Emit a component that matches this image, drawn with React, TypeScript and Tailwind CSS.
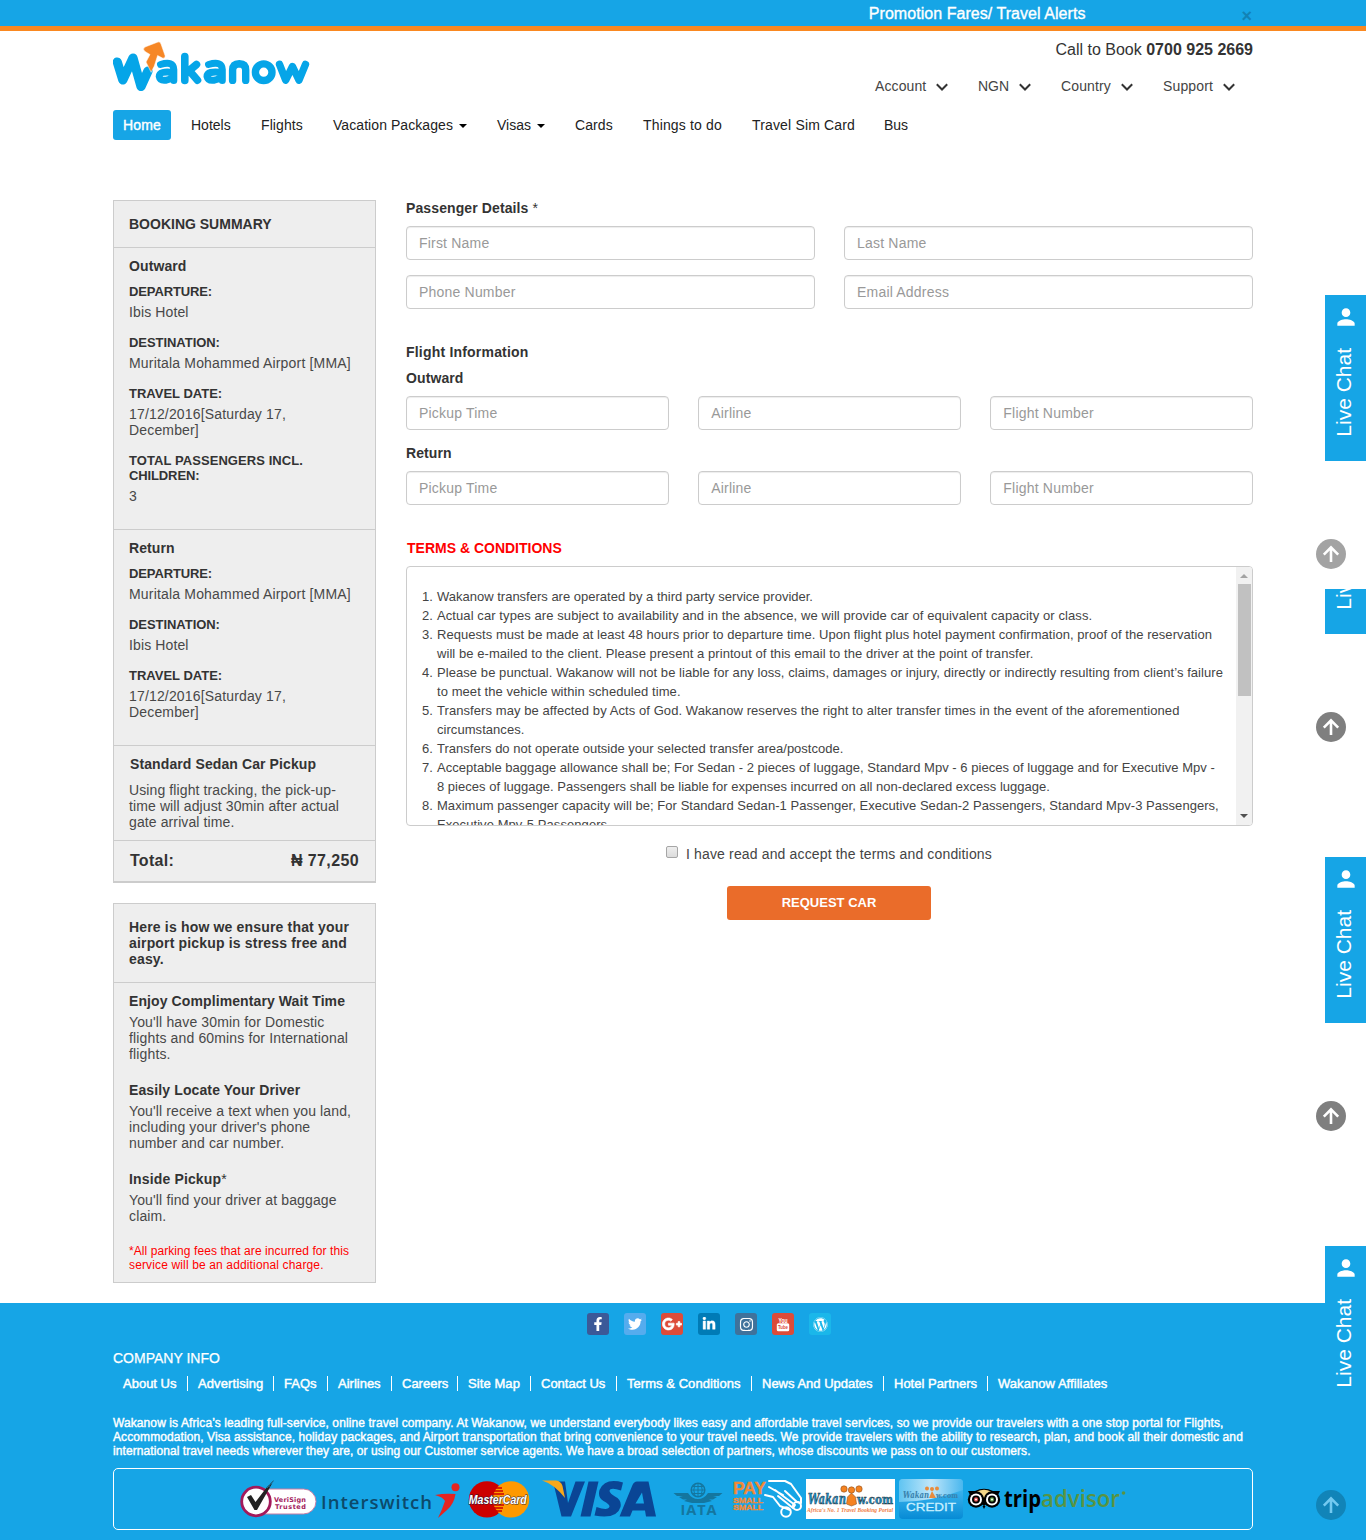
import type { ReactNode } from "react";
import { FaFacebookF, FaTwitter, FaGooglePlusG, FaLinkedinIn, FaInstagram, FaWordpress } from "react-icons/fa";
import { MdPerson } from "react-icons/md";

const menu = [
  { label: "Account", cls: "w-[51px] tracking-[0.1px]" },
  { label: "NGN", cls: "w-[31px]" },
  { label: "Country", cls: "w-[50px] tracking-[0.13px]" },
  { label: "Support", cls: "w-[50px] tracking-[0.13px]" },
];

const nav = [
  { label: "Hotels", cls: "w-[40px]" },
  { label: "Flights", cls: "w-[42px] tracking-[0.1px]" },
  { label: "Vacation Packages", cls: "w-[134px] tracking-[0.07px]", caret: true },
  { label: "Visas", cls: "w-[48px]", caret: true },
  { label: "Cards", cls: "w-[38px] tracking-[0.1px]" },
  { label: "Things to do", cls: "w-[79px] tracking-[0.16px]" },
  { label: "Travel Sim Card", cls: "w-[102px] tracking-[0.16px]" },
  { label: "Bus", cls: "w-[25px]" },
];

const links = [
  { label: "About Us", cls: "w-[75px]" },
  { label: "Advertising", cls: "w-[86px] tracking-[0.1px]" },
  { label: "FAQs", cls: "w-[54px]" },
  { label: "Airlines", cls: "w-[64px]" },
  { label: "Careers", cls: "w-[66px]" },
  { label: "Site Map", cls: "w-[73px] tracking-[0.08px]" },
  { label: "Contact Us", cls: "w-[86px]" },
  { label: "Terms & Conditions", cls: "w-[135px] tracking-[0.05px]" },
  { label: "News And Updates", cls: "w-[132px]" },
  { label: "Hotel Partners", cls: "w-[104px]" },
  { label: "Wakanow Affiliates", cls: "w-[131px] tracking-[0.05px]" },
];

const terms: { cls: string; text: string }[][] = [
  [{ cls: "", text: "Wakanow transfers are operated by a third party service provider." }],
  [{ cls: "tracking-[0.085px]", text: "Actual car types are subject to availability and in the absence, we will provide car of equivalent capacity or class." }],
  [
    { cls: "tracking-[0.04px]", text: "Requests must be made at least 48 hours prior to departure time. Upon flight plus hotel payment confirmation, proof of the reservation" },
    { cls: "tracking-[0.06px]", text: "will be e-mailed to the client. Please present a printout of this email to the driver at the point of transfer." },
  ],
  [
    { cls: "tracking-[0.067px]", text: "Please be punctual. Wakanow will not be liable for any loss, claims, damages or injury, directly or indirectly resulting from client’s failure" },
    { cls: "tracking-[0.07px]", text: "to meet the vehicle within scheduled time." },
  ],
  [
    { cls: "tracking-[0.075px]", text: "Transfers may be affected by Acts of God. Wakanow reserves the right to alter transfer times in the event of the aforementioned" },
    { cls: "tracking-[0.05px]", text: "circumstances." },
  ],
  [{ cls: "tracking-[0.01px]", text: "Transfers do not operate outside your selected transfer area/postcode." }],
  [
    { cls: "tracking-[0.035px]", text: "Acceptable baggage allowance shall be; For Sedan - 2 pieces of luggage, Standard Mpv - 6 pieces of luggage and for Executive Mpv -" },
    { cls: "tracking-[0.015px]", text: "8 pieces of luggage. Passengers shall be liable for expenses incurred on all non-declared excess luggage." },
  ],
  [
    { cls: "tracking-[0.04px]", text: "Maximum passenger capacity will be; For Standard Sedan-1 Passenger, Executive Sedan-2 Passengers, Standard Mpv-3 Passengers," },
    { cls: "tracking-[0.07px]", text: "Executive Mpv-5 Passengers." },
  ],
];

function Logo() {
  return (
    <svg width="197" height="51" viewBox="0 0 197 51" fill="none" stroke="#05a5e8" strokeWidth="7.6" strokeLinecap="round" strokeLinejoin="round">
      <path d="M4.300 21 9.800 39 20 17 28 45.500 35 30" strokeWidth="9.200" />
      <path d="M38 31 33 21 37 13.500 32 10.500Q29 8 32 6L45 1Q47 .3 48 3L52.200 15Q52 18 49.500 17L44.600 14.500 41.300 25Z" fill="#f68726" stroke="#fff" strokeWidth=".5" />
      <path d="M47.500 23.500Q60.500 19.500 60.800 28.500V39.500M60.500 31.500Q46.200 29.500 46.200 35.500 47 40 53 39.200 60.800 38 60.800 32" strokeWidth="7" />
      <path d="M71.800 15.500V39.500M83.500 23.500 74 31.500M77 30.500 84.500 39.200" />
      <path d="M95.500 23.500Q109 19.500 109.300 28.500V39.500M109 31.500Q94 29.500 94 35.500 95 40 101 39.200 109.300 38 109.300 32" strokeWidth="7" />
      <path d="M119.600 39.400V29Q119.800 22.800 126.300 22.700 132.700 22.800 132.700 29V39.400" strokeWidth="7.400" />
      <circle cx="150.700" cy="31.200" r="8.300" strokeWidth="7.400" />
      <path d="M166.500 23.300 172.700 39.200 179.500 25.500 186 39.200 192.500 23.300" strokeWidth="7.400" />
    </svg>
  );
}

function Field({ children }: { children: ReactNode }) {
  return (
    <div className="flex h-[34px] min-w-0 flex-1 items-center rounded border border-[#ccc] bg-white px-3 text-sm tracking-[0.2px] text-[#999] shadow-[inset_0_1px_1px_rgba(0,0,0,0.075)]">
      {children}
    </div>
  );
}

function Entry({ label, lines, cls = "" }: { label: ReactNode; lines: string[]; cls?: string }) {
  return (
    <>
      <dt className="text-[13px] font-bold leading-[15px]">{label}</dt>
      <dd className={"mt-[5px] mb-[15px] text-sm leading-4 text-[#484848] " + cls}>
        {lines.map((l) => (
          <div key={l}>{l}</div>
        ))}
      </dd>
    </>
  );
}

function LiveChat() {
  return (
    <div className="flex h-[166px] w-[41px] shrink-0 flex-col items-center bg-[#16a5e6] text-white">
      <MdPerson className="mt-[9px] h-[26px] w-[26px]" />
      <span className="mt-[18px] mr-[4px] rotate-180 text-[21px] leading-6 [writing-mode:vertical-rl]">Live Chat</span>
    </div>
  );
}

function ToTop({ cls }: { cls: string }) {
  return (
    <div className={"absolute right-5 flex size-[30px] items-center justify-center rounded-full " + cls}>
      <svg width="24" height="24" viewBox="0 0 24 24" fill="none" stroke="currentColor" strokeWidth="2.600">
        <path d="M12 20V6M4.800 12.600 12 5.400 19.200 12.600" />
      </svg>
    </div>
  );
}

function Payments() {
  return (
    <div className="flex h-[62px] rounded-[5px] border border-white pl-[125px] pt-[10px]">
      <svg width="79" height="40" viewBox="0 0 79 40" className="mr-[3px] shrink-0">
        <rect x="14" y="10" width="63" height="25" rx="12.500" fill="#fff" stroke="#c77ba3" strokeWidth="1" />
        <circle cx="17" cy="22.500" r="14.300" fill="#fff" stroke="#a3195b" strokeWidth="2.800" />
        <path d="M8 18 12 16 16.500 23 28 8 35 1 30 10 18 31 15.500 31Z" fill="#222" />
        <path d="M28 9 36 1M30 5 35 4M27 7 33 8" stroke="#16a5e6" strokeWidth=".8" strokeDasharray="1 1.500" />
        <text x="35" y="23" fontSize="6.500" fontWeight="700" fontFamily="DejaVu Sans" fill="#a3195b" textLength="32">VeriSign</text>
        <text x="36" y="30" fontSize="6.500" fontWeight="700" fontFamily="DejaVu Sans" fill="#a3195b" textLength="31">Trusted</text>
      </svg>
      <svg width="140" height="40" viewBox="0 0 140 40" className="mr-[7px] shrink-0">
        <text x="0" y="30.300" fontSize="18.500" fontWeight="600" fontFamily="Open Sans" fill="#0c4a6b" textLength="111">Interswitch</text>
        <circle cx="134.500" cy="8.300" r="4" fill="#e52421" />
        <path d="M114 16Q124 14 134.500 15 133 25 126 31L117 39Q121 31 124 22 122 18 114 16Z" fill="#e52421" />
      </svg>
      <svg width="62" height="40" viewBox="0 0 62 40" className="mr-[11px] shrink-0">
        <circle cx="19" cy="20.400" r="18.200" fill="#c00" />
        <circle cx="43" cy="20.400" r="18.200" fill="#f90" />
        <path d="M28 9H34M26 12H35M25 15H36M25 26H36M26 29H35M28 32H34" stroke="#c00" strokeWidth="1.400" />
        <text x=".8" y="24.500" fontSize="12.500" fontWeight="700" fontStyle="italic" fontFamily="Liberation Sans" fill="#fff" stroke="#1d1d3a" strokeWidth="1" paintOrder="stroke" textLength="58" lengthAdjust="spacingAndGlyphs">MasterCard</text>
      </svg>
      <svg width="116" height="40" viewBox="0 0 116 40" className="mr-4 shrink-0">
        <path d="M12 2.500H24L27 24 34.500 2.500H44L30 37.500H20.500Z" fill="#0a4595" />
        <path d="M1 1.500H15Q20 2 21.500 7L24 19Q13 5 1 1.500Z" fill="#f7a81b" />
        <path d="M47.500 2.500H57.500L49.500 37.500H39.500Z" fill="#0a4595" />
        <path d="M82 3.500 80 11.500Q69 8 68.500 12 69 14.500 74 17.500 81 21 79.500 28 76 40.500 53.500 36.500L55.500 28Q67.500 32 68.500 27.500 68.500 25 62.500 22 56.500 18.500 58.500 11 64 -1.500 82 3.500Z" fill="#0a4595" />
        <path d="M96 2.500H107.500L115 37.500H105L104 31.500H91.500L89 37.500H78.500L91.500 6Q93 2.500 96 2.500ZM101 13.500 94.500 24.500H103Z" fill="#0a4595" fillRule="evenodd" />
      </svg>
      <svg width="50" height="40" viewBox="0 0 50 40" className="mr-[9px] shrink-0">
        <g fill="none" stroke="#14769f">
          <circle cx="25" cy="11" r="6.800" strokeWidth="1.500" />
          <path d="M18.500 11H31.500M25 4V18M22 5Q19.500 11 22 17M28 5Q30.500 11 28 17M20 7.500H30M20 14.500H30" strokeWidth="1" />
        </g>
        <path d="M.5 14H15Q19 20 25 20 31 20 35 14H49.500L46 17H40L44 18 40 20.500H36L39 22 31 24H19L11 22 14 20.500H10L6 18 10 17H4Z" fill="#14769f" />
        <text x="7.500" y="36" fontSize="14.500" fontWeight="700" fontFamily="Open Sans" fill="#14769f" textLength="36">IATA</text>
      </svg>
      <svg width="71" height="40" viewBox="0 0 71 40" className="mr-[3px] shrink-0">
        <g fill="#f18a35" fontFamily="Liberation Sans" fontWeight="700" stroke="#f18a35" strokeWidth=".4">
          <text x="1" y="15" fontSize="17" textLength="33" lengthAdjust="spacingAndGlyphs">PAY</text>
          <text x="1" y="23.500" fontSize="7.500" textLength="30" lengthAdjust="spacingAndGlyphs">SMALL</text>
          <text x="1" y="31" fontSize="7.500" textLength="30" lengthAdjust="spacingAndGlyphs">SMALL</text>
        </g>
        <g fill="none" stroke="#fff" strokeWidth="2" strokeLinecap="round" strokeLinejoin="round">
          <path d="M37 2H53L59 5 69 19V24L65 23 53 12M37 8 51 16M33 16 41 18 48 27 58 31M43 11 63 26 61 29 46 17" />
          <circle cx="54" cy="33" r="4.800" />
          <circle cx="65" cy="27" r="4" />
        </g>
      </svg>
      <svg width="89" height="40" viewBox="0 0 89 40" className="mr-1 shrink-0">
        <rect width="89" height="40" fill="#fff" />
        <text x="2" y="25" fontSize="14" fontWeight="700" fontStyle="italic" fontFamily="DejaVu Serif" fill="#1590cd" stroke="#333" strokeWidth=".5" textLength="38" lengthAdjust="spacingAndGlyphs">Wakan</text>
        <g fill="#f58220" stroke="#8d5425" strokeWidth=".6">
          <circle cx="38" cy="10" r="3.200" /><circle cx="45.500" cy="11" r="3.200" /><circle cx="53" cy="10" r="3.200" />
          <path d="M45.500 14 49.500 18 50.500 25 45.500 27 40.500 25 41.500 18Z" />
        </g>
        <text x="51" y="25" fontSize="13" fontWeight="700" fontFamily="DejaVu Serif" fill="#1590cd" stroke="#333" strokeWidth=".5" textLength="36" lengthAdjust="spacingAndGlyphs">w.com</text>
        <text x="1" y="32.500" fontSize="5.500" fontWeight="700" fontStyle="italic" fontFamily="Liberation Serif" fill="#f07b3c" textLength="86">Africa's No. 1 Travel Booking Portal</text>
      </svg>
      <svg width="64" height="40" viewBox="0 0 64 40" className="mr-1 shrink-0">
        <defs>
          <linearGradient id="credit" x2="0" y2="1"><stop stopColor="#4dbcf0" /><stop offset=".55" stopColor="#27a5e5" /><stop offset="1" stopColor="#078bd5" /></linearGradient>
          <linearGradient id="shine"><stop stopColor="#5fc4f2" /><stop offset=".5" stopColor="#bfe6fa" /><stop offset="1" stopColor="#49b7ee" /></linearGradient>
        </defs>
        <rect width="64" height="40" rx="4" fill="url(#credit)" />
        <path d="M4 0H60Q64 0 64 4V11Q32 23 0 23V4Q0 0 4 0Z" fill="url(#shine)" />
        <text x="4" y="18.500" fontSize="8.500" fontWeight="700" fontStyle="italic" fontFamily="DejaVu Serif" fill="#3982ad" textLength="26" lengthAdjust="spacingAndGlyphs">Wakan</text>
        <g fill="#e98b3c"><circle cx="28" cy="9.500" r="2" /><circle cx="33" cy="10" r="2" /><circle cx="38" cy="9.500" r="2" /><path d="M33 12 37 19H30Z" /></g>
        <text x="37" y="18.500" fontSize="8" fontWeight="700" fontFamily="DejaVu Serif" fill="#3982ad" textLength="22" lengthAdjust="spacingAndGlyphs">w.com</text>
        <text x="7" y="32" fontSize="11.500" fontFamily="Liberation Sans" fill="#c9f0ff" stroke="#c9f0ff" strokeWidth=".3" textLength="50" lengthAdjust="spacingAndGlyphs">CREDIT</text>
      </svg>
      <svg width="162" height="40" viewBox="0 0 162 40" className="shrink-0">
        <path d="M1 12H8Q17 7.500 26 12H33L31 16 17 27 3 16Z" fill="#000" />
        <path d="M10 12.500Q17 9 24 12.500L17 19Z" fill="#f5d789" />
        <circle cx="9" cy="20.500" r="8.200" fill="#000" /><circle cx="25" cy="20.500" r="8.200" fill="#000" />
        <circle cx="9" cy="20.500" r="6" fill="#fff" /><circle cx="25" cy="20.500" r="6" fill="#fff" />
        <circle cx="9" cy="20.500" r="3.100" fill="#d64545" stroke="#000" strokeWidth="1.800" /><circle cx="25" cy="20.500" r="3.100" fill="#589442" stroke="#000" strokeWidth="1.800" />
        <circle cx="9" cy="20.500" r="1" fill="#fff" /><circle cx="25" cy="20.500" r="1" fill="#fff" />
        <path d="M15.500 27H18.500L17 30Z" fill="#000" />
        <text x="37" y="28" fontSize="23" fontWeight="700" fontFamily="Open Sans" fontStretch="normal"><tspan fill="#000" textLength="37" lengthAdjust="spacingAndGlyphs">trip</tspan><tspan fill="#589442" fontWeight="600" textLength="79" lengthAdjust="spacingAndGlyphs">advisor</tspan></text>
        <circle cx="156.500" cy="14" r="1.800" fill="#589442" />
      </svg>
    </div>
  );
}

export default function App() {
  return (
    <div className="relative h-[1540px] overflow-hidden whitespace-nowrap bg-white font-['Liberation_Sans',Arial,sans-serif] text-sm text-[#333]">
      <div className="h-[31px] border-b-[5px] border-[#fa8820] bg-[#16a5e6]">
        <div className="mx-auto flex h-[26px] w-[1140px] justify-end text-base text-white">
          <span className="mr-[156px] leading-[27px] tracking-[0.05px] [-webkit-text-stroke:0.35px_white]">Promotion Fares/ Travel Alerts</span>
          <span className="mr-[1px] text-[18px] font-bold leading-[32px] text-[#1282b5]">×</span>
        </div>
      </div>

      <header className="mx-auto flex h-[79px] w-[1140px] justify-between">
        <div className="pt-[10px]"><Logo /></div>
        <div className="flex flex-col items-end">
          <div className="mt-[10px] text-base leading-[18px]">Call to Book <b>0700 925 2669</b></div>
          <div className="mr-[18px] mt-[19px] flex gap-[30px] leading-4 text-[#444]">
            {menu.map((m) => (
              <div key={m.label} className="flex gap-[10px]">
                <span className={m.cls}>{m.label}</span>
                <svg width="12" height="16" viewBox="0 0 12 16" fill="none" stroke="#333" strokeWidth="2"><path d="M.8 6.300 6 11.500 11.200 6.300" /></svg>
              </div>
            ))}
          </div>
        </div>
      </header>

      <nav className="mx-auto flex h-[90px] w-[1140px] items-start leading-[30px] text-[#222]">
        <span className="mr-5 w-[58px] rounded-[3px] bg-[#16a5e6] text-center text-white tracking-[0.15px] [-webkit-text-stroke:0.4px_white]">Home</span>
        <div className="flex gap-[30px]">
          {nav.map((n) => (
            <span key={n.label} className={"flex items-center justify-between " + n.cls}>
              {n.label}
              {n.caret && <i className="mt-0.5 size-0 border-x-4 border-t-4 border-x-transparent border-t-black" />}
            </span>
          ))}
        </div>
      </nav>

      <main className="mx-auto flex h-[1103px] w-[1140px] items-start gap-[30px]">
        <aside className="w-[263px] shrink-0">
          <section className="h-[683px] border border-b-2 border-[#ccc] bg-[#eee]">
            <h2 className="h-[47px] border-b border-[#ccc] pl-[15px] font-bold leading-[46px]">BOOKING SUMMARY</h2>
            <div className="h-[282px] border-b border-[#ccc] px-[15px] pt-[10px]">
              <h3 className="mb-[10px] font-bold leading-4 tracking-[0.1px]">Outward</h3>
              <dl>
                <Entry label={<span className="tracking-[-0.12px]">DEPARTURE:</span>} lines={["Ibis Hotel"]} cls="tracking-[0.12px]" />
                <Entry label={<span className="tracking-[-0.05px]">DESTINATION:</span>} lines={["Muritala Mohammed Airport [MMA]"]} cls="tracking-[0.18px]" />
                <Entry label="TRAVEL DATE:" lines={["17/12/2016[Saturday 17,", "December]"]} cls="tracking-[0.16px]" />
                <Entry label={<><span className="tracking-[0.07px]">TOTAL PASSENGERS INCL.</span><br /><span className="tracking-[-0.12px]">CHILDREN:</span></>} lines={["3"]} />
              </dl>
            </div>
            <div className="h-[216px] border-b border-[#ccc] px-[15px] pt-[10px]">
              <h3 className="mb-[10px] font-bold leading-4 tracking-[0.1px]">Return</h3>
              <dl>
                <Entry label={<span className="tracking-[-0.12px]">DEPARTURE:</span>} lines={["Muritala Mohammed Airport [MMA]"]} cls="tracking-[0.18px]" />
                <Entry label={<span className="tracking-[-0.05px]">DESTINATION:</span>} lines={["Ibis Hotel"]} cls="tracking-[0.12px]" />
                <Entry label="TRAVEL DATE:" lines={["17/12/2016[Saturday 17,", "December]"]} cls="tracking-[0.16px]" />
              </dl>
            </div>
            <div className="h-[95px] border-b border-[#ccc] px-[15px] pt-[10px] leading-4">
              <h3 className="mb-[10px] pl-[1px] font-bold tracking-[0.1px]">Standard Sedan Car Pickup</h3>
              <p className="tracking-[0.11px] text-[#484848]">Using flight tracking, the pick-up-<br />time will adjust 30min after actual<br />gate arrival time.</p>
            </div>
            <div className="flex h-10 items-center justify-between px-4 text-base font-bold tracking-[0.27px]">
              <span>Total:</span><span className="tracking-[0.37px]">₦ 77,250</span>
            </div>
          </section>

          <section className="mt-5 h-[380px] border border-[#ccc] bg-[#eee] leading-4">
            <h2 className="h-[79px] border-b border-[#ccc] px-[15px] pt-[15px] font-bold tracking-[0.17px]">Here is how we ensure that your<br />airport pickup is stress free and<br />easy.</h2>
            <div className="px-[15px] pt-[10px] text-[#484848]">
              <h3 className="mb-[5px] font-bold tracking-[0.1px] text-[#333]">Enjoy Complimentary Wait Time</h3>
              <p className="mb-5 tracking-[0.14px]">You'll have 30min for Domestic<br />flights and 60mins for International<br />flights.</p>
              <h3 className="mb-[5px] font-bold tracking-[0.12px] text-[#333]">Easily Locate Your Driver</h3>
              <p className="mb-5 tracking-[0.12px]">You'll receive a text when you land,<br />including your driver's phone<br />number and car number.</p>
              <h3 className="mb-[5px] font-bold tracking-[0.15px] text-[#333]">Inside Pickup<span className="font-normal">*</span></h3>
              <p className="mb-5 tracking-[0.14px]">You'll find your driver at baggage<br />claim.</p>
              <p className="text-xs leading-[14px] tracking-[0.14px] text-[#f00]"><span className="tracking-[0.075px]">*All parking fees that are incurred for this</span><br />service will be an additional charge.</p>
            </div>
          </section>
        </aside>

        <section className="w-[847px]">
          <h3 className="mb-[10px] font-bold leading-4 tracking-[0.11px]">Passenger Details <span className="font-normal">*</span></h3>
          <div className="mb-[15px] flex gap-[29px]"><Field>First Name</Field><Field>Last Name</Field></div>
          <div className="mb-[35px] flex gap-[29px]"><Field>Phone Number</Field><Field>Email Address</Field></div>
          <h3 className="mb-[10px] font-bold leading-4 tracking-[0.2px]">Flight Information</h3>
          <h4 className="mb-[10px] font-bold leading-4 tracking-[0.1px]">Outward</h4>
          <div className="mb-[15px] flex gap-[29.5px]"><Field>Pickup Time</Field><Field>Airline</Field><Field>Flight Number</Field></div>
          <h4 className="mb-[10px] font-bold leading-4 tracking-[0.1px]">Return</h4>
          <div className="mb-[35px] flex gap-[29.5px]"><Field>Pickup Time</Field><Field>Airline</Field><Field>Flight Number</Field></div>
          <h3 className="mb-[10px] pl-[1px] font-bold leading-4 text-[#f00]">TERMS &amp; CONDITIONS</h3>

          <div className="flex h-[260px] overflow-hidden rounded border border-[#ccc]">
            <ol className="flex-1 pl-[15px] pt-5 text-[13px] leading-[19px] text-[#444]">
              {terms.map((lines, i) => (
                <li key={i} className="flex">
                  <span className="w-[15px]">{i + 1}.</span>
                  <div>{lines.map((l) => <div key={l.text} className={l.cls}>{l.text}</div>)}</div>
                </li>
              ))}
            </ol>
            <div className="flex w-4 flex-col items-center bg-[#f1f1f1]">
              <i className="mt-[7px] size-0 border-x-4 border-b-4 border-x-transparent border-b-[#a3a3a3]" />
              <div className="mt-[6px] ml-px h-[112px] w-[13px] bg-[#c1c1c1]" />
              <i className="mt-auto mb-[7px] size-0 border-x-4 border-t-4 border-x-transparent border-t-[#505050]" />
            </div>
          </div>

          <label className="mt-5 flex h-4 pl-[260px] leading-4 tracking-[0.15px] text-[#444]">
            <input type="checkbox" className="mr-2 size-3 appearance-none rounded-[2px] border border-[#a6a6a6] bg-linear-to-b from-[#eee] to-[#dcdcdc]" />
            I have read and accept the terms and conditions
          </label>
          <button className="ml-[321px] mt-6 block h-[34px] w-[204px] rounded-[3px] bg-[#ea6c2a] text-center text-[13px] font-bold text-white">REQUEST CAR</button>
        </section>
      </main>

      <footer className="h-[237px] bg-[#16a5e6] text-white">
        <div className="mx-auto w-[1140px] pt-[10px]">
          <div className="flex gap-[15px] pl-[474px] [&>div]:flex [&>div]:size-[22px] [&>div]:items-center [&>div]:justify-center [&>div]:rounded-[3px]">
            <div className="bg-[#3b5998]"><FaFacebookF className="size-[14px]" /></div>
            <div className="bg-[#55acee]"><FaTwitter className="size-[14px]" /></div>
            <div className="bg-[#dd4b39]"><FaGooglePlusG className="size-5" stroke="white" strokeWidth="20" /></div>
            <div className="bg-[#007bb6]"><FaLinkedinIn className="size-[14px]" stroke="white" strokeWidth="14" /></div>
            <div className="bg-[#3f729b]"><FaInstagram className="size-[15px]" /></div>
            <div className="bg-[#dd4b39]">
              <svg width="16" height="18" viewBox="0 0 16 18">
                <text x="3.500" y="7.500" fontSize="7" fontWeight="700" fontFamily="Liberation Sans" fill="#fff" textLength="9" lengthAdjust="spacingAndGlyphs">You</text>
                <rect x="1.800" y="8.200" width="12.400" height="8" rx="1.500" fill="#fff" />
                <text x="3" y="14.400" fontSize="6" fontWeight="700" fontFamily="Liberation Sans" fill="#dd4b39" textLength="10" lengthAdjust="spacingAndGlyphs">Tube</text>
              </svg>
            </div>
            <div className="bg-[#1ab7ea]"><FaWordpress className="size-[15px]" /></div>
          </div>
          <h3 className="mt-[15px] leading-4 [-webkit-text-stroke:0.25px_white]">COMPANY INFO</h3>
          <ul className="mt-[10px] flex text-[13px] leading-[15px] [-webkit-text-stroke:0.45px_white]">
            {links.map((l) => (
              <li key={l.label} className={"border-r border-white pl-[10px] last:border-r-0 " + l.cls}>{l.label}</li>
            ))}
          </ul>
          <p className="mb-[10px] mt-[25px] text-xs leading-[14px] tracking-[0.094px] [-webkit-text-stroke:0.4px_white]">
            Wakanow is Africa’s leading full-service, online travel company. At Wakanow, we understand everybody likes easy and affordable travel services, so we provide our travelers with a one stop portal for Flights,<br />
            Accommodation, Visa assistance, holiday packages, and Airport transportation that bring convenience to your travel needs. We provide travelers with the ability to research, plan, and book all their domestic and<br />
            <span className="tracking-[0.08px]">international travel needs wherever they are, or using our Customer service agents. We have a broad selection of partners, whose discounts we pass on to our customers.</span>
          </p>
          <Payments />
        </div>
      </footer>

      <div className="absolute right-0 top-[295px]"><LiveChat /></div>
      <div className="absolute right-0 top-[589px] flex h-[45px] items-end overflow-hidden"><LiveChat /></div>
      <div className="absolute right-0 top-[857px]"><LiveChat /></div>
      <div className="absolute right-0 top-[1246px]"><LiveChat /></div>
      <ToTop cls="top-[539px] bg-[#a3a3a3] text-white" />
      <ToTop cls="top-[712px] bg-[#7f7f7f] text-white" />
      <ToTop cls="top-[1101px] bg-[#7f7f7f] text-white" />
      <ToTop cls="top-[1490px] bg-[#1184b8] text-[#73c9f0]" />
    </div>
  );
}
